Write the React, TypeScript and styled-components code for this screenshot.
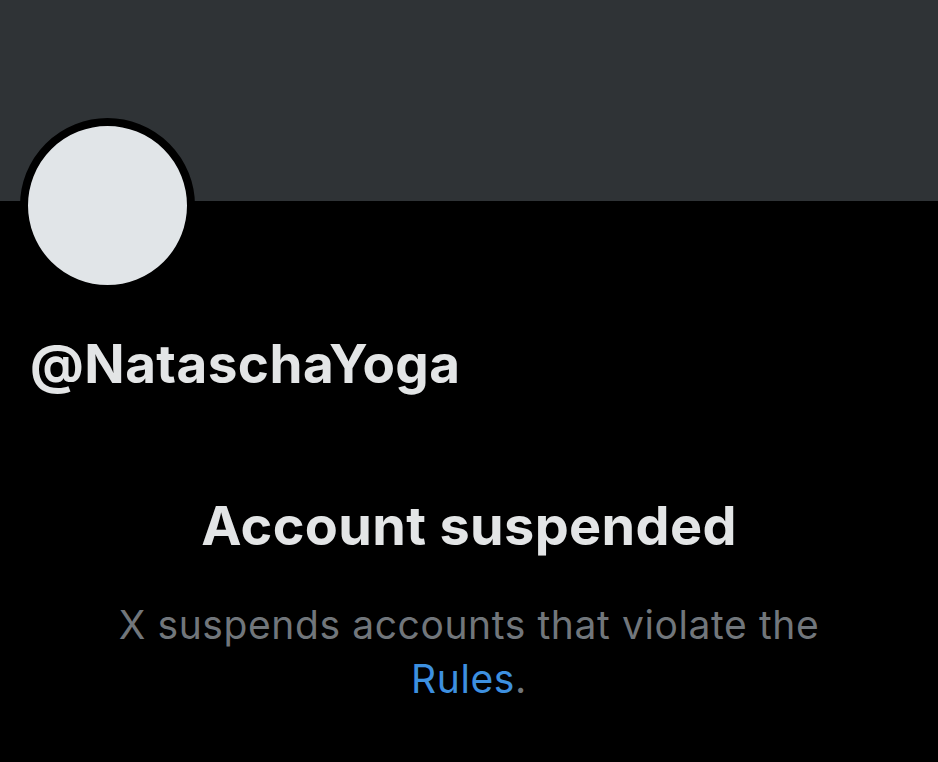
import styled, { createGlobalStyle } from 'styled-components';

const GlobalStyle = createGlobalStyle`
  html, body {
    margin: 0;
    padding: 0;
    background: #000;
  }
  body {
    font-family: Inter, "Noto Sans", "Liberation Sans", sans-serif;
    -webkit-font-smoothing: antialiased;
  }
`;

const Page = styled.div`
  width: 938px;
  height: 762px;
  background: #000;
  overflow: hidden;
`;

const Banner = styled.div`
  height: 201px;
  background: #2f3336;
`;

const Avatar = styled.div`
  width: 159px;
  height: 159px;
  margin: -83px 0 0 20px;
  border: 8px solid #000;
  border-radius: 50%;
  background: #e1e5e8;
`;

const Handle = styled.div`
  margin: 39px 0 0 30px;
  color: #e3e5e6;
  font-size: 53px;
  font-weight: 700;
  letter-spacing: 0.45px;
  line-height: 64px;
`;

const Notice = styled.section`
  display: flex;
  flex-direction: column;
  align-items: center;
  text-align: center;
  margin-top: 98px;
`;

const Title = styled.h2`
  margin: 0;
  color: #e3e5e6;
  font-size: 54px;
  font-weight: 700;
  letter-spacing: 0.35px;
  line-height: 64px;
`;

const Body = styled.p`
  margin: 40px 0 0;
  color: #71767b;
  font-size: 39px;
  letter-spacing: 0.6px;
  line-height: 54px;
  max-width: 760px;
`;

const Link = styled.a`
  color: #3d90e0;
  text-decoration: none;
`;

export default function App() {
  return (
    <Page>
      <GlobalStyle />
      <Banner />
      <Avatar />
      <Handle>@NataschaYoga</Handle>
      <Notice>
        <Title>Account suspended</Title>
        <Body>
          X suspends accounts that violate the
          <br />
          <Link href="#">Rules</Link>.
        </Body>
      </Notice>
    </Page>
  );
}
